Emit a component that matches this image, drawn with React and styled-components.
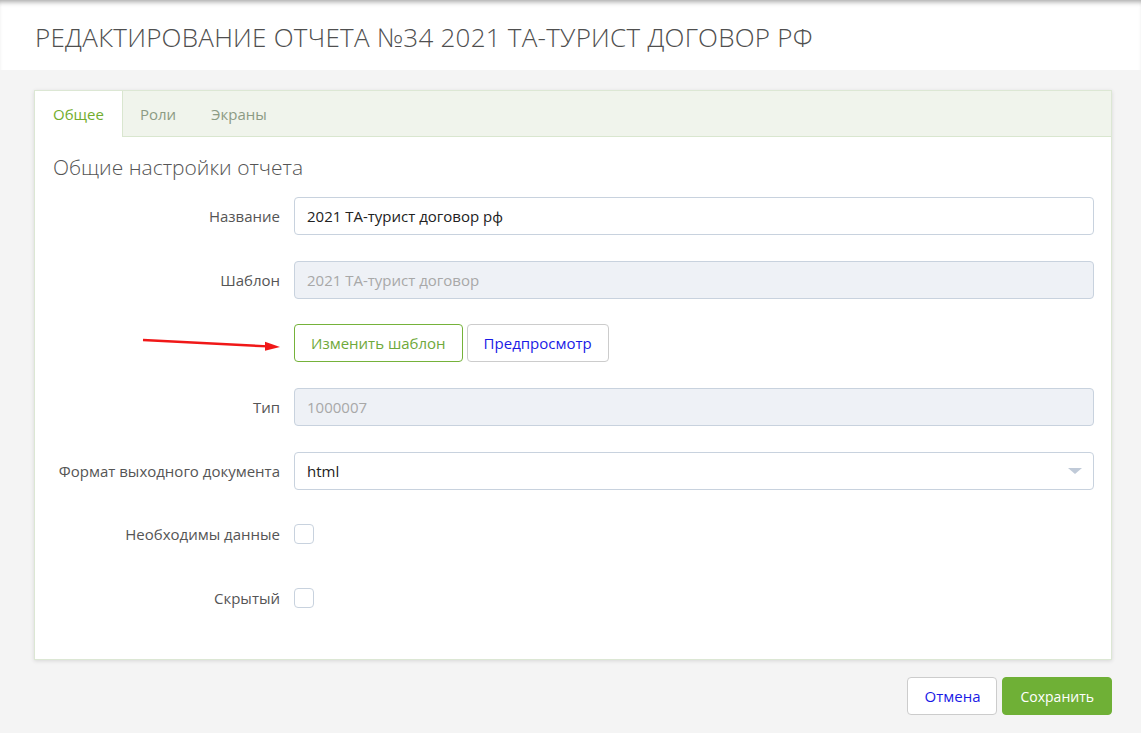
import React from 'react';
import styled, { createGlobalStyle } from 'styled-components';

const GlobalStyle = createGlobalStyle`
  html, body {
    margin: 0;
    padding: 0;
    background: #f4f4f4;
    font-family: 'Open Sans', 'Noto Sans', sans-serif;
    color: #555;
  }
`;

const tabs = ['Общее', 'Роли', 'Экраны'];

export default function App() {
  return (
    <>
      <GlobalStyle />
      <Page>
        <Header>
          <Title>Редактирование отчета №34 2021 ТА-турист договор рф</Title>
        </Header>
        <Main>
          <Card>
            <TabBar>
              {tabs.map((t, i) => (
                <Tab key={t} active={i === 0}>
                  {t}
                </Tab>
              ))}
            </TabBar>
            <Body>
              <SectionTitle>Общие настройки отчета</SectionTitle>
              <Form>
                <Row>
                  <Label>Название</Label>
                  <Input defaultValue='2021 ТА-турист договор рф' />
                </Row>
                <Row>
                  <Label>Шаблон</Label>
                  <Input disabled defaultValue='2021 ТА-турист договор' />
                </Row>
                <Row shift={-1}>
                  <ArrowCell>
                    <svg width='140' height='20' viewBox='0 0 140 20'>
                      <line x1='2' y1='5' x2='127' y2='11.4' stroke='#f01818' strokeWidth='2.4' />
                      <polygon points='124,6.8 139,12 124,15.8' fill='#f01818' />
                    </svg>
                  </ArrowCell>
                  <ButtonGroup>
                    <OutlineButton tone='green'>Изменить шаблон</OutlineButton>
                    <OutlineButton tone='link'>Предпросмотр</OutlineButton>
                  </ButtonGroup>
                </Row>
                <Row>
                  <Label>Тип</Label>
                  <Input disabled defaultValue='1000007' />
                </Row>
                <Row>
                  <Label>Формат выходного документа</Label>
                  <Select>
                    <span>html</span>
                    <Caret />
                  </Select>
                </Row>
                <Row shift={-1}>
                  <Label>Необходимы данные</Label>
                  <Checkbox />
                </Row>
                <Row>
                  <Label>Скрытый</Label>
                  <Checkbox />
                </Row>
              </Form>
            </Body>
          </Card>
          <Footer>
            <OutlineButton tone='link'>Отмена</OutlineButton>
            <PrimaryButton>Сохранить</PrimaryButton>
          </Footer>
        </Main>
      </Page>
    </>
  );
}

const Page = styled.div`
  min-height: 733px;
  background: #f4f4f4;
`;

const Header = styled.header`
  height: 70px;
  background: #fff;
  padding: 0 35px;
  display: flex;
  align-items: center;
  box-shadow: inset 0 5px 5px -3px rgba(0, 0, 0, 0.35);
`;

const Title = styled.h1`
  margin: 0;
  padding-top: 4px;
  font-family: 'Open Sans', sans-serif;
  font-weight: 300;
  font-size: 26px;
  letter-spacing: 0.25px;
  text-transform: uppercase;
  color: #4f4f4f;
`;

const Main = styled.main`
  padding: 20px 29px 0 34px;
`;

const Card = styled.section`
  background: #fff;
  border: 1px solid #dce7d4;
  box-shadow: 0 1px 4px rgba(0, 0, 0, 0.12);
`;

const TabBar = styled.nav`
  display: flex;
  height: 46px;
  background: #f0f4ec;
  border-bottom: 1px solid #d9e6cf;
  box-sizing: border-box;
`;

const Tab = styled.div`
  display: flex;
  align-items: center;
  padding: 0 18px 0 ${p => (p.active ? '18px' : '17px')};
  font-size: 15px;
  color: ${p => (p.active ? '#72ad2e' : '#8c9b84')};
  background: ${p => (p.active ? '#fff' : 'transparent')};
  border-right: ${p => (p.active ? '1px solid #d9e6cf' : 'none')};
  margin-bottom: ${p => (p.active ? '-1px' : '0')};
`;

const Body = styled.div`
  padding: 16px 17px 42px 18px;
`;

const SectionTitle = styled.h2`
  margin: 0 0 16px;
  font-weight: 300;
  font-size: 21px;
  line-height: 28px;
  color: #555;
`;

const Form = styled.div`
  display: flex;
  flex-direction: column;
  gap: 26px;
`;

const Row = styled.div`
  display: grid;
  grid-template-columns: 227px 1fr;
  column-gap: 14px;
  align-items: center;
  height: 38px;
  margin-top: ${p => p.shift || 0}px;
`;

const Label = styled.label`
  text-align: right;
  font-size: 15px;
  color: #555;
`;

const ArrowCell = styled.div`
  display: flex;
  justify-content: flex-end;
  margin-right: -1px;
  padding-top: 4px;
`;

const Input = styled.input`
  height: 38px;
  box-sizing: border-box;
  width: 100%;
  border: 1px solid #c8d2de;
  border-radius: 4px;
  padding: 0 12px;
  font-family: inherit;
  font-size: 15px;
  color: #222;
  background: #fff;

  &:disabled {
    background: #eef1f6;
    color: #a8a8a8;
  }
`;

const Select = styled.div`
  height: 38px;
  box-sizing: border-box;
  border: 1px solid #c8d2de;
  border-radius: 4px;
  padding: 0 12px;
  display: flex;
  align-items: center;
  justify-content: space-between;
  font-size: 15px;
  color: #222;
`;

const Caret = styled.span`
  width: 0;
  height: 0;
  margin-right: -1px;
  border-left: 7px solid transparent;
  border-right: 7px solid transparent;
  border-top: 6px solid #c0cad8;
`;

const Checkbox = styled.span`
  width: 20px;
  height: 20px;
  box-sizing: border-box;
  border: 1px solid #c8d2de;
  border-radius: 4px;
  background: #fff;
`;

const ButtonGroup = styled.div`
  display: flex;
  gap: 4px;
`;

const OutlineButton = styled.button`
  height: 38px;
  padding: 0 16px;
  background: #fff;
  border: 1px solid ${p => (p.tone === 'green' ? '#75b23a' : '#cccccc')};
  border-radius: 4px;
  font-family: inherit;
  font-size: 15px;
  color: ${p => (p.tone === 'green' ? '#6fa93a' : '#1a1ae6')};
  cursor: pointer;
`;

const PrimaryButton = styled.button`
  height: 38px;
  padding: 0 17px;
  background: #6fb036;
  border: 1px solid #6fb036;
  border-radius: 4px;
  font-family: inherit;
  font-size: 14px;
  color: #fff;
  cursor: pointer;
`;

const Footer = styled.footer`
  display: flex;
  justify-content: flex-end;
  gap: 5px;
  padding-top: 17px;
`;
